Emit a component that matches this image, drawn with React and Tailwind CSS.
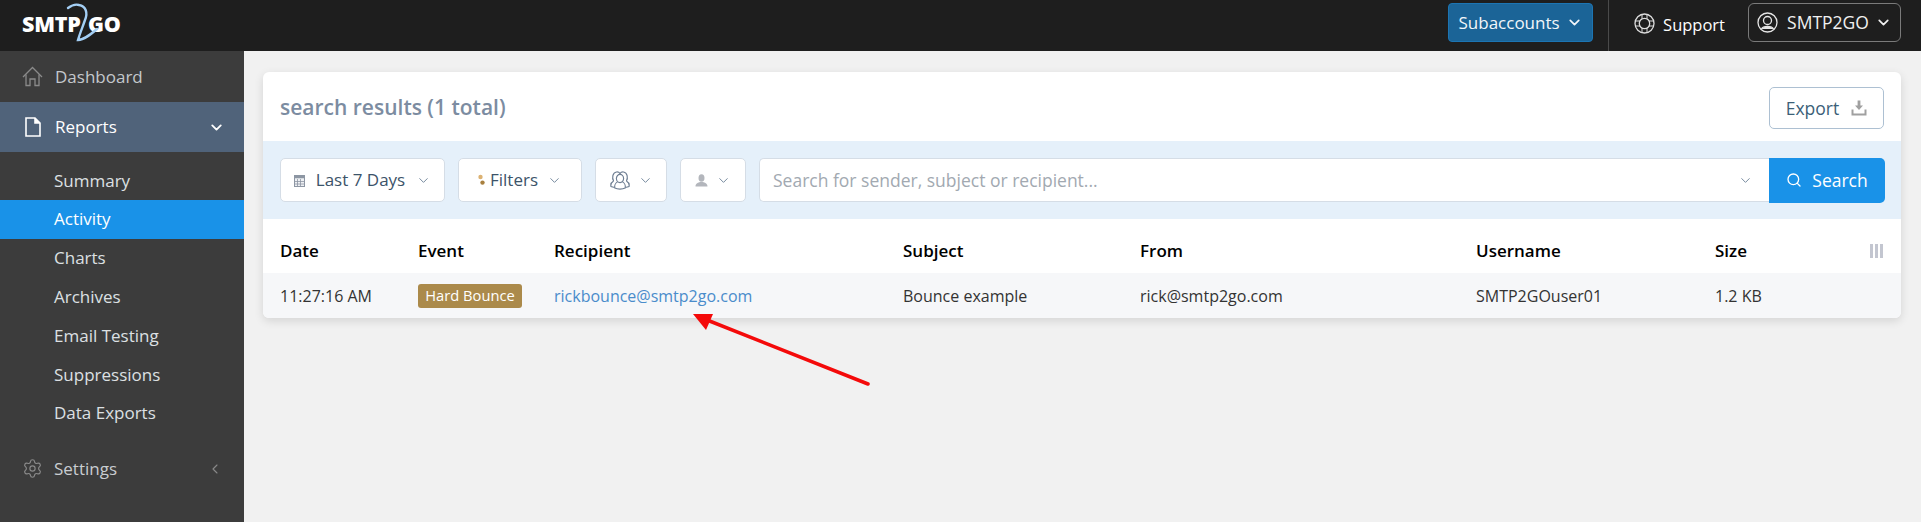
import { ChevronDown, ChevronLeft, Search, Settings } from 'lucide-react';

const subItems = ['Summary', 'Activity', 'Charts', 'Archives', 'Email Testing', 'Suppressions', 'Data Exports'];

const Logo = () => (
  <div className="relative w-[100px] h-[51px] ml-[22px]">
    <span className="absolute left-0 top-[10px] text-[21.5px] leading-[28px] font-extrabold text-white tracking-[-0.2px]">SMTP</span>
    <span className="absolute left-[66px] top-[10px] text-[21.5px] leading-[28px] font-extrabold text-white tracking-[-0.2px]">GO</span>
    <svg className="absolute left-[44px] top-0" width="36" height="44" viewBox="0 0 36 44" fill="none">
      <path d="M2 8 C6 5 10 4 13 5 C20 6 22 13 19 20 C17 26 14 33 12 40 C18 40 24 35 31 29" stroke="#a3cef4" strokeWidth="2.4" strokeLinecap="round" />
    </svg>
  </div>
);

const HomeIcon = () => (
  <svg width="21" height="21" viewBox="0 0 21 21" fill="none" stroke="#8a8a8a" strokeWidth="1.3">
    <path d="M1 11 L10.5 1.5 L20 11" />
    <path d="M4 8.5 V19.5 H8 V13 H13 V19.5 H17 V8.5" />
  </svg>
);

const FileIcon = () => (
  <svg width="16" height="20" viewBox="0 0 16 20" fill="none" stroke="#fff" strokeWidth="1.6">
    <path d="M1 1 H10 L15 6 V19 H1 Z" />
    <path d="M10 1 V6 H15" fill="#fff" />
  </svg>
);

const LifeRing = () => (
  <svg width="21" height="21" viewBox="0 0 21 21" fill="none" stroke="#dcdcdc" strokeWidth="1.3">
    <circle cx="10.5" cy="10.5" r="9.5" />
    <circle cx="10.5" cy="10.5" r="5.2" />
    <path d="M8 1.5 V6 M13 1.5 V6 M8 15 V19.5 M13 15 V19.5 M1.5 8 H6 M1.5 13 H6 M15 8 H19.5 M15 13 H19.5" strokeWidth="1" />
  </svg>
);

const UserCircle = () => (
  <svg width="21" height="21" viewBox="0 0 21 21" fill="none" stroke="#e6e6e6" strokeWidth="1.3">
    <circle cx="10.5" cy="10.5" r="9.5" />
    <circle cx="10.5" cy="8.5" r="4" />
    <path d="M4.5 17 C6 13.5 15 13.5 16.5 17" fill="#e6e6e6" />
  </svg>
);

const CalIcon = () => (
  <svg width="11" height="13" viewBox="0 0 11 13" fill="none" stroke="#8d96a3">
    <rect x="0.5" y="1.5" width="10" height="11" fill="#eef0f3" />
    <path d="M0.5 3 H10.5" strokeWidth="2.4" />
    <path d="M3.5 5 V12 M6.5 5 V12 M1 7.5 H10 M1 10 H10" strokeWidth="0.8" />
  </svg>
);

const GroupIcon = () => (
  <svg width="20" height="20" viewBox="0 0 20 20" fill="none" stroke="#6f7f93" strokeWidth="1.2">
    <path d="M3.6 11 C1.8 8 2.5 2.5 6.5 2 C8.2 1.8 9.4 2.6 10 3.6 C10.6 2.6 11.8 1.8 13.5 2 C17.5 2.5 18.2 8 16.4 11" />
    <path d="M3.6 11 C1 12.5 0.6 15 1 16.5 L4.6 17.5 M16.4 11 C19 12.5 19.4 15 19 16.5 L15.4 17.5" />
    <ellipse cx="10" cy="8.5" rx="3.6" ry="4.2" />
    <path d="M7.4 12 C5.2 13 4.4 16 4.8 18 C7.5 19.4 12.5 19.4 15.2 18 C15.6 16 14.8 13 12.6 12" />
  </svg>
);

const PersonIcon = () => (
  <svg width="13" height="13" viewBox="0 0 13 13" fill="#b3b6bc">
    <ellipse cx="6.5" cy="4" rx="3" ry="3.8" />
    <path d="M0.5 12.5 C0.5 9 3.5 8.5 5 8 H8 C9.5 8.5 12.5 9 12.5 12.5 Z" />
  </svg>
);

const FilterDots = () => (
  <svg width="7" height="12" viewBox="0 0 7 12">
    <circle cx="2.5" cy="3" r="2.2" fill="#dcb273" />
    <circle cx="4.5" cy="8.6" r="2.2" fill="#a8803f" />
  </svg>
);

const ExportIcon = () => (
  <svg width="16" height="16" viewBox="0 0 16 16" fill="#a0a0a0">
    <path d="M6.6 0.5 H9.4 V5.5 H12 L8 10 L4 5.5 H6.6 Z" />
    <path d="M0.5 9.5 H2.5 V13.5 H13.5 V9.5 H15.5 V15.5 H0.5 Z" />
  </svg>
);

const Toolbtn = ({ children, w }) => (
  <button className={`h-[44px] ${w} flex items-center justify-center bg-white border border-[#d5dde6] rounded-[5px] text-[#3c5369] text-[17px]`}>
    {children}
  </button>
);

const cols = [
  ['Date', 'w-[138px]'],
  ['Event', 'w-[136px]'],
  ['Recipient', 'w-[349px]'],
  ['Subject', 'w-[237px]'],
  ['From', 'w-[336px]'],
  ['Username', 'w-[239px]'],
  ['Size', 'flex-1'],
];

export default function App() {
  return (
    <div className="w-[1921px] h-[522px] overflow-hidden flex flex-col bg-[#f1f1f1] font-['Open_Sans',sans-serif]">
      <header className="h-[51px] shrink-0 bg-[#1e1e1e] flex items-center">
        <Logo />
        <div className="ml-auto flex items-center h-full">
          <button className="h-[39px] w-[145px] mb-[6px] flex items-center justify-center gap-[6px] bg-[#1b6497] border border-[#1c75b3] rounded-[4px] text-[#f2f6fa] text-[17px]">
            Subaccounts <ChevronDown size={17} strokeWidth={2.4} />
          </button>
          <div className="ml-[15px] w-px h-full bg-[#4a4a4a]" />
          <div className="ml-[25px] mb-[5px] flex items-center gap-[8px] text-white text-[16.5px]">
            <LifeRing />
            <span className="pt-[4px]">Support</span>
          </div>
          <button className="ml-[23px] mr-[20px] mb-[6px] h-[39px] w-[153px] flex items-center justify-center gap-[6px] border border-[#7a7a7a] rounded-[6px] text-[#f0f0f0] text-[17.5px]">
            <UserCircle />
            <span className="ml-[3px]">SMTP2GO</span>
            <ChevronDown size={17} strokeWidth={2.4} />
          </button>
        </div>
      </header>

      <div className="flex-1 flex min-h-0">
        <aside className="w-[244px] shrink-0 bg-[#3c3c3c] text-[17px]">
          <div className="h-[51px] flex items-center pl-[22px] gap-[12px] text-[#c4c8cc]">
            <HomeIcon />
            <span>Dashboard</span>
          </div>
          <div className="h-[50px] flex items-center pl-[25px] pr-[19px] gap-[14px] bg-[#50637a] text-white">
            <FileIcon />
            <span>Reports</span>
            <ChevronDown size={17} strokeWidth={2.6} className="ml-auto" />
          </div>
          <div className="pt-[9px]">
            {subItems.map((item) => (
              <div key={item} className={`h-[38.8px] flex items-center pl-[54px] ${item === 'Activity' ? 'bg-[#1992e8] text-white' : 'text-[#dde0e3]'}`}>
                {item}
              </div>
            ))}
          </div>
          <div className="mt-[11px] h-[50px] flex items-center pl-[22px] pr-[21px] gap-[11px] text-[#c9cdd1]">
            <Settings size={21} strokeWidth={1.3} className="text-[#8a8a8a]" />
            <span>Settings</span>
            <ChevronLeft size={16} strokeWidth={1.6} className="ml-auto text-[#8a8a8a]" />
          </div>
        </aside>

        <main className="flex-1 pt-[21px] pl-[19px] pr-[20px]">
          <section className="relative bg-white rounded-[6px] shadow-[0_3px_10px_rgba(0,0,0,0.12)] overflow-hidden">
            <div className="h-[69px] flex items-center justify-between pl-[17px] pr-[17px]">
              <h2 className="mt-[3px] text-[21px] font-semibold text-[#7c8ca1]">search results (1 total)</h2>
              <button className="h-[42px] w-[115px] mt-[3px] flex items-center justify-center gap-[12px] border border-[#adc0d2] rounded-[5px] text-[#3c5f78] text-[17.5px]">
                Export <ExportIcon />
              </button>
            </div>

            <div className="h-[78px] bg-[#e5f0fa] flex items-center pl-[17px] pr-[16px]">
              <Toolbtn w="w-[165px] gap-[11px]">
                <CalIcon />
                <span>Last 7 Days</span>
                <ChevronDown size={15} strokeWidth={1.5} className="text-[#6d8297]" />
              </Toolbtn>
              <div className="w-[13px]" />
              <Toolbtn w="w-[124px] gap-[5px]">
                <FilterDots />
                <span>Filters</span>
                <ChevronDown size={15} strokeWidth={1.5} className="ml-[4px] text-[#6d8297]" />
              </Toolbtn>
              <div className="w-[13px]" />
              <Toolbtn w="w-[72px] gap-[8px]">
                <GroupIcon />
                <ChevronDown size={15} strokeWidth={1.5} className="text-[#6d8297]" />
              </Toolbtn>
              <div className="w-[13px]" />
              <Toolbtn w="w-[66px] gap-[8px]">
                <PersonIcon />
                <ChevronDown size={15} strokeWidth={1.5} className="text-[#6d8297]" />
              </Toolbtn>
              <div className="w-[13px]" />
              <div className="flex-1 h-[44px] flex items-center bg-white border border-[#d5dde6] border-r-0 rounded-l-[5px] pl-[13px] pr-[16px] text-[17.5px] text-[#a2a9b1]">
                <span>Search for sender, subject or recipient...</span>
                <ChevronDown size={15} strokeWidth={1.5} className="ml-auto text-[#6d8297]" />
              </div>
              <button className="h-[45px] w-[116px] flex items-center justify-center gap-[10px] bg-[#1992e8] rounded-r-[5px] text-white text-[17.5px]">
                <Search size={16} strokeWidth={2} />
                Search
              </button>
            </div>

            <div className="h-[54px] pt-[9px] flex items-center pl-[17px] pr-[17px] text-[17px] font-semibold text-black">
              {cols.map(([name, w]) => (
                <div key={name} className={w}>{name}</div>
              ))}
              <svg width="14" height="14" viewBox="0 0 14 14" fill="#c3c6d0">
                <rect x="0" y="0" width="3" height="14" />
                <rect x="5" y="0" width="3" height="14" />
                <rect x="10" y="0" width="3" height="14" />
              </svg>
            </div>

            <div className="h-[45px] flex items-center pl-[17px] pr-[17px] bg-[#f6f7f9] text-[16px] text-[#333]">
              <div className="w-[138px]">11:27:16 AM</div>
              <div className="w-[136px]">
                <span className="inline-flex items-center justify-center w-[104px] h-[24px] rounded-[3px] bg-[#ab8a4b] text-white text-[14.7px]">Hard Bounce</span>
              </div>
              <div className="w-[349px] text-[#4a8ccb]">rickbounce@smtp2go.com</div>
              <div className="w-[237px]">Bounce example</div>
              <div className="w-[336px]">rick@smtp2go.com</div>
              <div className="w-[239px]">SMTP2GOuser01</div>
              <div className="flex-1">1.2 KB</div>
            </div>
          </section>

          {/* annotation arrow */}
          <svg className="absolute left-[690px] top-[310px]" width="182" height="78" viewBox="0 0 182 78" fill="none">
            <path d="M178 74 L12 8" stroke="#f40a0a" strokeWidth="3.5" strokeLinecap="round" />
            <path d="M3 4 L23 4 L16 20 Z" fill="#f40a0a" />
          </svg>
        </main>
      </div>
    </div>
  );
}
